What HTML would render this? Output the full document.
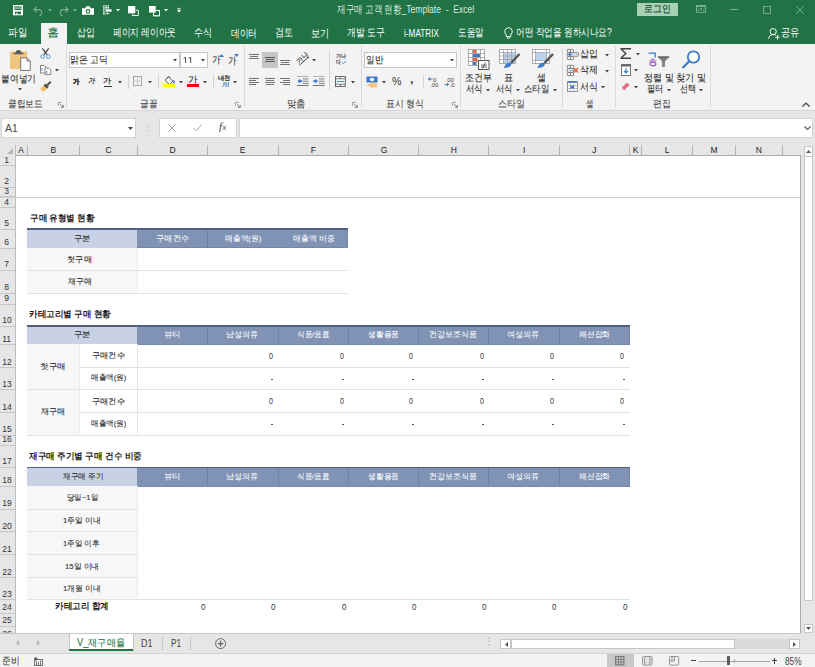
<!DOCTYPE html>
<html><head><meta charset="utf-8"><style>
html,body{margin:0;padding:0;}
body{width:815px;height:667px;overflow:hidden;position:relative;font-family:'Liberation Sans',sans-serif;background:#fff;}
</style></head><body>
<div style='position:absolute;left:0px;top:0px;width:815px;height:44px;background:#217346;'></div>
<svg style='position:absolute;left:13px;top:5.2px;overflow:visible' width='10' height='10.3' viewBox='0 0 10 10.3'><rect x='0' y='0' width='10' height='10.3' fill='#fff'/><rect x='1.4' y='1.4' width='7.2' height='3.6' fill='#217346'/><rect x='1.4' y='2.6' width='7.2' height='1' fill='#cfe3d6'/><rect x='2' y='6.6' width='6' height='2.6' fill='#217346'/><rect x='3.3' y='7.8' width='1.3' height='1.4' fill='#fff'/></svg>
<svg style='position:absolute;left:33px;top:5.5px;overflow:visible' width='11' height='10' viewBox='0 0 11 10'><path d='M3.6 0.9 L0.9 3.6 L3.6 6.3 M0.9 3.6 H6.2 A3.1 3.1 0 0 1 6.5 9.6' fill='none' stroke='#7fb08f' stroke-width='1.1'/></svg>
<svg style='position:absolute;left:48px;top:9px;overflow:visible' width='4' height='3' viewBox='0 0 4 3'><path d='M0 0h4l-2 2.5z' fill='#7fb08f'/></svg>
<svg style='position:absolute;left:57.5px;top:5.5px;overflow:visible' width='11' height='10' viewBox='0 0 11 10'><path d='M7.4 0.9 L10.1 3.6 L7.4 6.3 M10.1 3.6 H4.8 A3.1 3.1 0 0 0 4.5 9.6' fill='none' stroke='#7fb08f' stroke-width='1.1'/></svg>
<svg style='position:absolute;left:72.5px;top:9px;overflow:visible' width='4' height='3' viewBox='0 0 4 3'><path d='M0 0h4l-2 2.5z' fill='#7fb08f'/></svg>
<svg style='position:absolute;left:82px;top:6.2px;overflow:visible' width='12' height='8.8' viewBox='0 0 12 8.8'><path d='M0 2.3h3.2l1.2-2h3.2l1.2 2h3.2v6.5h-12z' fill='#fff'/><circle cx='6' cy='5.4' r='2.3' fill='#217346'/><circle cx='6' cy='5.4' r='1.2' fill='#fff'/></svg>
<svg style='position:absolute;left:102.6px;top:5.4px;overflow:visible' width='9' height='10' viewBox='0 0 9 10'><path d='M0.6 0v10M2 0v10' stroke='#fff' stroke-width='0.7'/><rect x='3' y='0.5' width='2.5' height='1.8' fill='none' stroke='#fff' stroke-width='0.6'/><rect x='3' y='2.5' width='2.5' height='1.5' fill='none' stroke='#fff' stroke-width='0.6'/><rect x='3' y='4.3' width='5.6' height='2.4' fill='#fff'/><path d='M3 8.5l2-1.3v2.6z' fill='#fff'/><path d='M5 8.5h1.5' stroke='#fff' stroke-width='0.7'/></svg>
<svg style='position:absolute;left:116px;top:8.8px;overflow:visible' width='4' height='3' viewBox='0 0 4 3'><path d='M0 0h4l-2 2.5z' fill='#fff'/></svg>
<svg style='position:absolute;left:128.2px;top:5.9px;overflow:visible' width='11' height='10' viewBox='0 0 11 10'><rect x='0' y='0' width='7.3' height='7.3' fill='#fff'/><path d='M7.8 4.2h2.6v5.3h-5.8v-1.7' fill='none' stroke='#fff' stroke-width='0.9'/></svg>
<svg style='position:absolute;left:148.8px;top:5.9px;overflow:visible' width='11' height='10' viewBox='0 0 11 10'><rect x='4.5' y='4.5' width='6' height='5.3' fill='none' stroke='#e3eee6' stroke-width='0.9'/><rect x='0' y='0' width='6.7' height='6.6' fill='#fff'/><path d='M4.5 6.6v3.2h6v-5.3h-3.8' fill='none' stroke='#fff' stroke-width='0.9'/></svg>
<svg style='position:absolute;left:163.5px;top:8.6px;overflow:visible' width='4' height='3' viewBox='0 0 4 3'><path d='M0 0h4l-2 2.5z' fill='#fff'/></svg>
<svg style='position:absolute;left:177px;top:8px;overflow:visible' width='4' height='5' viewBox='0 0 4 5'><path d='M0.3 0.4h3.4' stroke='#fff' stroke-width='0.8'/><path d='M0 1.8h4l-2 2.9z' fill='#fff'/></svg>
<div style='position:absolute;left:636.7px;top:2.9px;width:41.19999999999993px;height:12.9px;background:#a9d1b6;border-radius:1px;'></div>
<svg style='position:absolute;left:696px;top:5.4px;overflow:visible' width='10' height='7.8' viewBox='0 0 10 7.8'><rect x='0.5' y='0.5' width='9' height='6.8' fill='none' stroke='#7aae8b' stroke-width='1'/><rect x='0.5' y='0.5' width='9' height='1.5' fill='#7aae8b'/><path d='M5 3v3M3.8 4.2L5 3l1.2 1.2M2 3.5v2h1M8 3.5v2h-1' fill='none' stroke='#7aae8b' stroke-width='0.8'/></svg>
<div style='position:absolute;left:730.2px;top:9px;width:7.699999999999932px;height:1px;background:#80b192;'></div>
<svg style='position:absolute;left:763px;top:6px;overflow:visible' width='8' height='8' viewBox='0 0 8 8'><rect x='0.5' y='0.5' width='7' height='7' fill='none' stroke='#80b192' stroke-width='0.9'/></svg>
<svg style='position:absolute;left:795.8px;top:6px;overflow:visible' width='8' height='8' viewBox='0 0 8 8'><path d='M0.3 0.3L7.7 7.7M7.7 0.3L0.3 7.7' stroke='#80b192' stroke-width='0.9'/></svg>
<div style='position:absolute;left:40.5px;top:23px;width:26.200000000000003px;height:21px;background:#f3f3f3;'></div>
<svg style='position:absolute;left:503.5px;top:27px;overflow:visible' width='9' height='12' viewBox='0 0 9 12'><path d='M4.5 0.7a3.8 3.8 0 0 1 2.3 6.8v2.2h-4.6v-2.2a3.8 3.8 0 0 1 2.3-6.8z' fill='none' stroke='#fff' stroke-width='1'/><path d='M3 11h3' stroke='#fff' stroke-width='1'/></svg>
<svg style='position:absolute;left:767.7px;top:27.6px;overflow:visible' width='12' height='11' viewBox='0 0 12 11'><circle cx='5.2' cy='3.6' r='3.1' fill='none' stroke='#fff' stroke-width='1'/><path d='M0.6 10.8c0.3-2.6 2.2-4.3 4.6-4.3 1 0 1.8 0.3 2.5 0.7' fill='none' stroke='#fff' stroke-width='1'/><path d='M7.3 9.2h4.4M9.5 7v4.4' stroke='#fff' stroke-width='1.1'/></svg>
<div style='position:absolute;left:0px;top:44px;width:815px;height:66px;background:#f3f3f3;'></div>
<div style='position:absolute;left:0px;top:110px;width:815px;height:1px;background:#d6d6d6;'></div>
<div style='position:absolute;left:0px;top:111px;width:815px;height:34px;background:#e6e6e6;'></div>
<div style='position:absolute;left:65.5px;top:46px;width:1.0px;height:61px;background:#dadada;'></div>
<div style='position:absolute;left:243.9px;top:46px;width:1.0px;height:61px;background:#dadada;'></div>
<div style='position:absolute;left:360.9px;top:46px;width:1.0px;height:61px;background:#dadada;'></div>
<div style='position:absolute;left:460.3px;top:46px;width:1.0px;height:61px;background:#dadada;'></div>
<div style='position:absolute;left:561.6px;top:46px;width:1.0px;height:61px;background:#dadada;'></div>
<div style='position:absolute;left:615.4px;top:46px;width:1.0px;height:61px;background:#dadada;'></div>
<div style='position:absolute;left:710.4px;top:46px;width:1.0px;height:61px;background:#dadada;'></div>
<svg style='position:absolute;left:57.5px;top:102.0px;overflow:visible' width='6' height='6' viewBox='0 0 6 6'><path d='M0.4 4V0.4h3.6' stroke='#888' stroke-width='0.8' fill='none'/><path d='M2 2l3.3 3.3M5.3 2.8v2.5h-2.5' stroke='#666' stroke-width='0.8' fill='none'/></svg>
<svg style='position:absolute;left:234.9px;top:102.0px;overflow:visible' width='6' height='6' viewBox='0 0 6 6'><path d='M0.4 4V0.4h3.6' stroke='#888' stroke-width='0.8' fill='none'/><path d='M2 2l3.3 3.3M5.3 2.8v2.5h-2.5' stroke='#666' stroke-width='0.8' fill='none'/></svg>
<svg style='position:absolute;left:352.4px;top:102.0px;overflow:visible' width='6' height='6' viewBox='0 0 6 6'><path d='M0.4 4V0.4h3.6' stroke='#888' stroke-width='0.8' fill='none'/><path d='M2 2l3.3 3.3M5.3 2.8v2.5h-2.5' stroke='#666' stroke-width='0.8' fill='none'/></svg>
<svg style='position:absolute;left:451.9px;top:102.0px;overflow:visible' width='6' height='6' viewBox='0 0 6 6'><path d='M0.4 4V0.4h3.6' stroke='#888' stroke-width='0.8' fill='none'/><path d='M2 2l3.3 3.3M5.3 2.8v2.5h-2.5' stroke='#666' stroke-width='0.8' fill='none'/></svg>
<svg style='position:absolute;left:10px;top:49.3px;overflow:visible' width='21' height='22' viewBox='0 0 21 22'><rect x='0.1' y='2.5' width='17' height='17.6' fill='#efc67e'/><path d='M3.5 5.3h10v-1.5h-2.2a2.3 2.3 0 0 0-5.6 0h-2.2z' fill='#5a5a5a'/><path d='M10.7 8.8h6.3l3.3 3.3v9.3h-9.6z' fill='#fff' stroke='#666' stroke-width='0.9'/><path d='M17 8.8v3.3h3.3' fill='none' stroke='#666' stroke-width='0.9'/></svg>
<svg style='position:absolute;left:18px;top:88px;overflow:visible' width='4' height='3' viewBox='0 0 4 3'><path d='M0 0h4l-2 2.5z' fill='#444'/></svg>
<svg style='position:absolute;left:40px;top:48px;overflow:visible' width='11' height='11' viewBox='0 0 11 11'><path d='M2.3 0.3L7.1 6.6M8.7 0.3L3.9 6.6' stroke='#3a3a3a' stroke-width='1.1'/><circle cx='2.6' cy='8.6' r='1.8' fill='none' stroke='#5b93cf' stroke-width='1'/><circle cx='8.4' cy='8.6' r='1.8' fill='none' stroke='#5b93cf' stroke-width='1'/></svg>
<svg style='position:absolute;left:39.5px;top:65.3px;overflow:visible' width='12' height='10' viewBox='0 0 12 10'><path d='M0.5 0.5h3.8l1.6 1.6v5.9h-5.4z' fill='#fff' stroke='#777' stroke-width='0.9'/><path d='M5 3h3.8l2 2v4.6h-5.8z' fill='#fff' stroke='#777' stroke-width='0.9'/><path d='M2 3v2.8M6.8 6v2.5' stroke='#5b93cf' stroke-width='1.1'/></svg>
<svg style='position:absolute;left:55.3px;top:69px;overflow:visible' width='4' height='3' viewBox='0 0 4 3'><path d='M0 0h4l-2 2.5z' fill='#444'/></svg>
<svg style='position:absolute;left:40px;top:81.6px;overflow:visible' width='12' height='10.5' viewBox='0 0 12 10.5'><path d='M0.2 6.8L3.6 3.4 6.9 6.7 3.3 10.1z' fill='#ebbd66'/><path d='M3.6 3.4L5.6 1.5 8.8 4.7 6.9 6.7z' fill='#4f4f4f'/><path d='M7.2 3.2L10.6 -0.2' stroke='#4f4f4f' stroke-width='2'/></svg>
<div style='position:absolute;left:69.2px;top:52px;width:111.3px;height:15.5px;background:#fff;border:1px solid #c6c6c6;box-sizing:border-box;'></div>
<div style='position:absolute;left:179.5px;top:52px;width:28.80000000000001px;height:15.5px;background:#fff;border:1px solid #c6c6c6;box-sizing:border-box;'></div>
<svg style='position:absolute;left:173.2px;top:59px;overflow:visible' width='4' height='3' viewBox='0 0 4 3'><path d='M0 0h4l-2 2.5z' fill='#444'/></svg>
<svg style='position:absolute;left:201.4px;top:59px;overflow:visible' width='4' height='3' viewBox='0 0 4 3'><path d='M0 0h4l-2 2.5z' fill='#444'/></svg>
<svg style='position:absolute;left:183px;top:57px;overflow:visible' width='9' height='6' viewBox='0 0 9 6'><path d='M0.6 1.4L2.5 0.3V6M5.8 1.4L7.7 0.3V6' fill='none' stroke='#444' stroke-width='0.95'/></svg>
<svg style='position:absolute;left:219px;top:54px;overflow:visible' width='5' height='3' viewBox='0 0 5 3'><path d='M0 3h5l-2.5-3z' fill='#3d7bc7'/></svg>
<svg style='position:absolute;left:234px;top:54px;overflow:visible' width='5' height='3' viewBox='0 0 5 3'><path d='M0 0h5l-2.5 3z' fill='#3d7bc7'/></svg>
<div style='position:absolute;left:104px;top:85.5px;width:7.900000000000006px;height:0.7999999999999972px;background:#333;'></div>
<svg style='position:absolute;left:117.5px;top:80.5px;overflow:visible' width='4' height='3' viewBox='0 0 4 3'><path d='M0 0h4l-2 2.5z' fill='#444'/></svg>
<div style='position:absolute;left:127.5px;top:75px;width:1.0px;height:14px;background:#d0d0d0;'></div>
<svg style='position:absolute;left:133.4px;top:76px;overflow:visible' width='9' height='10' viewBox='0 0 9 10'><rect x='0.5' y='0.5' width='8' height='9' fill='none' stroke='#a6a6a6' stroke-width='1'/><path d='M4.5 0.5v9M0.5 5h8' stroke='#c8c8c8' stroke-width='1'/></svg>
<svg style='position:absolute;left:148.2px;top:80.5px;overflow:visible' width='4' height='3' viewBox='0 0 4 3'><path d='M0 0h4l-2 2.5z' fill='#444'/></svg>
<div style='position:absolute;left:158px;top:75px;width:1px;height:14px;background:#d0d0d0;'></div>
<svg style='position:absolute;left:164px;top:75.5px;overflow:visible' width='12' height='9' viewBox='0 0 12 9'><path d='M1 4.2l3.6-3.2 4.2 4.2-3.4 3.3z' fill='#fff' stroke='#444' stroke-width='0.9'/><path d='M3 2.6c0-2 2.5-2.5 3.2-0.5' fill='none' stroke='#444' stroke-width='0.8'/><path d='M9.2 3.5c1.3 1.3 2 2.5 1.5 3.6-0.5 0.8-1.6 0.6-1.6-0.4z' fill='#3d7bc7'/></svg>
<div style='position:absolute;left:163px;top:84.1px;width:11.599999999999994px;height:3.0px;background:#ffff00;'></div>
<svg style='position:absolute;left:179px;top:81px;overflow:visible' width='4' height='3' viewBox='0 0 4 3'><path d='M0 0h4l-2 2.5z' fill='#444'/></svg>
<div style='position:absolute;left:187.2px;top:84.1px;width:11.5px;height:3.0px;background:#ff0000;'></div>
<svg style='position:absolute;left:202.8px;top:81px;overflow:visible' width='4' height='3' viewBox='0 0 4 3'><path d='M0 0h4l-2 2.5z' fill='#444'/></svg>
<div style='position:absolute;left:212.6px;top:75px;width:1.0px;height:14px;background:#d0d0d0;'></div>
<svg style='position:absolute;left:221.9px;top:81.6px;overflow:visible' width='7' height='5' viewBox='0 0 7 5'><path d='M2 0v2.8c0 1-0.8 1.8-1.8 1.8M4 0v5M6.3 0v5' fill='none' stroke='#3d7bc7' stroke-width='1'/></svg>
<svg style='position:absolute;left:233.3px;top:80.5px;overflow:visible' width='4' height='3' viewBox='0 0 4 3'><path d='M0 0h4l-2 2.5z' fill='#444'/></svg>
<div style='position:absolute;left:249px;top:54px;width:10px;height:1px;background:#737373;'></div>
<div style='position:absolute;left:250px;top:56px;width:8px;height:1px;background:#737373;'></div>
<div style='position:absolute;left:249px;top:58px;width:10px;height:1px;background:#737373;'></div>
<div style='position:absolute;left:262px;top:52px;width:16px;height:16px;background:#c5c5c5;'></div>
<div style='position:absolute;left:265px;top:57px;width:10px;height:1px;background:#555;'></div>
<div style='position:absolute;left:266px;top:59px;width:8px;height:1px;background:#555;'></div>
<div style='position:absolute;left:265px;top:61px;width:10px;height:1px;background:#555;'></div>
<div style='position:absolute;left:280px;top:60px;width:10px;height:1px;background:#737373;'></div>
<div style='position:absolute;left:281px;top:62px;width:8px;height:1px;background:#737373;'></div>
<div style='position:absolute;left:280px;top:64px;width:10px;height:1px;background:#737373;'></div>
<svg style='position:absolute;left:297px;top:53px;overflow:visible' width='13' height='13' viewBox='0 0 13 13'><g transform='translate(-1.2,-1.5) rotate(-45 6 7)'><text x='0.5' y='9' font-size='6.5' fill='#444' font-family='Liberation Sans' stroke='#444' stroke-width='0.15'>가나</text></g><path d='M2.5 12.3L10.5 4.8' stroke='#444' stroke-width='1'/><circle cx='10.8' cy='4.6' r='1' fill='#444'/></svg>
<svg style='position:absolute;left:311.6px;top:58.5px;overflow:visible' width='4' height='3' viewBox='0 0 4 3'><path d='M0 0h4l-2 2.5z' fill='#444'/></svg>
<div style='position:absolute;left:329.4px;top:51.4px;width:1.0px;height:38.300000000000004px;background:#d5d5d5;'></div>
<svg style='position:absolute;left:341.5px;top:61px;overflow:visible' width='4' height='3' viewBox='0 0 4 3'><path d='M0.3 1.5l1.2 1.2 2.3-2.5' stroke='#3d7bc7' stroke-width='1' fill='none'/></svg>
<div style='position:absolute;left:249px;top:78px;width:10px;height:1px;background:#737373;'></div>
<div style='position:absolute;left:265px;top:78px;width:10px;height:1px;background:#737373;'></div>
<div style='position:absolute;left:280px;top:78px;width:10px;height:1px;background:#737373;'></div>
<div style='position:absolute;left:249px;top:80px;width:7px;height:1px;background:#737373;'></div>
<div style='position:absolute;left:266px;top:80px;width:8px;height:1px;background:#737373;'></div>
<div style='position:absolute;left:283px;top:80px;width:7px;height:1px;background:#737373;'></div>
<div style='position:absolute;left:249px;top:82px;width:10px;height:1px;background:#737373;'></div>
<div style='position:absolute;left:265px;top:82px;width:10px;height:1px;background:#737373;'></div>
<div style='position:absolute;left:280px;top:82px;width:10px;height:1px;background:#737373;'></div>
<div style='position:absolute;left:249px;top:84px;width:7px;height:1px;background:#737373;'></div>
<div style='position:absolute;left:266px;top:84px;width:8px;height:1px;background:#737373;'></div>
<div style='position:absolute;left:283px;top:84px;width:7px;height:1px;background:#737373;'></div>
<svg style='position:absolute;left:297.4px;top:76px;overflow:visible' width='12' height='10' viewBox='0 0 12 10'><rect x='0' y='0' width='11.6' height='0.9' fill='#aaa'/><rect x='5.8' y='2.5' width='5.8' height='0.9' fill='#777'/><rect x='5.8' y='4.7' width='5.8' height='0.9' fill='#777'/><rect x='5.8' y='6.9' width='5.8' height='0.9' fill='#777'/><rect x='0' y='9.1' width='11.6' height='0.9' fill='#666'/><path d='M0.3 5.1l2.8-2.4v4.8z' fill='#3d7bc7'/><rect x='2.5' y='4.2' width='2.6' height='1.8' fill='#3d7bc7'/></svg>
<svg style='position:absolute;left:313px;top:76px;overflow:visible' width='12' height='10' viewBox='0 0 12 10'><rect x='0' y='0' width='11.6' height='0.9' fill='#aaa'/><rect x='5.8' y='2.5' width='5.8' height='0.9' fill='#777'/><rect x='5.8' y='4.7' width='5.8' height='0.9' fill='#777'/><rect x='5.8' y='6.9' width='5.8' height='0.9' fill='#777'/><rect x='0' y='9.1' width='11.6' height='0.9' fill='#666'/><path d='M5 5.1l-2.8-2.4v4.8z' fill='#3d7bc7'/><rect x='0.2' y='4.2' width='2.6' height='1.8' fill='#3d7bc7'/></svg>
<svg style='position:absolute;left:335.1px;top:75.8px;overflow:visible' width='11' height='11' viewBox='0 0 11 11'><rect x='0.5' y='0.5' width='9.8' height='10' fill='#fff' stroke='#666' stroke-width='1'/><path d='M0.5 2.8h9.8M0.5 8.2h9.8M5.4 0.5v2.3M5.4 8.2v2.3' stroke='#666' stroke-width='0.9'/><path d='M2.3 5.5h6.2' stroke='#3d7bc7' stroke-width='0.9'/><path d='M1.6 5.5l1.3-1v2zM9.2 5.5l-1.3-1v2z' fill='#3d7bc7'/></svg>
<svg style='position:absolute;left:350.7px;top:80.5px;overflow:visible' width='4' height='3' viewBox='0 0 4 3'><path d='M0 0h4l-2 2.5z' fill='#444'/></svg>
<div style='position:absolute;left:364.1px;top:52.1px;width:92.5px;height:15.499999999999993px;background:#fff;border:1px solid #c6c6c6;box-sizing:border-box;'></div>
<svg style='position:absolute;left:449.5px;top:59px;overflow:visible' width='4' height='3' viewBox='0 0 4 3'><path d='M0 0h4l-2 2.5z' fill='#444'/></svg>
<svg style='position:absolute;left:366px;top:75.7px;overflow:visible' width='12' height='12' viewBox='0 0 12 12'><rect x='0.5' y='0.5' width='11' height='6' fill='#3d7bc7'/><ellipse cx='6' cy='3.5' rx='2.2' ry='1.8' fill='#fff'/><rect x='4' y='7' width='7' height='4.5' fill='#f2c57c'/><rect x='1.5' y='8' width='3' height='2' fill='#f2c57c'/></svg>
<svg style='position:absolute;left:381.7px;top:80.5px;overflow:visible' width='4' height='3' viewBox='0 0 4 3'><path d='M0 0h4l-2 2.5z' fill='#444'/></svg>
<div style='position:absolute;left:422.7px;top:75px;width:1.0px;height:14px;background:#d5d5d5;'></div>
<svg style='position:absolute;left:427.9px;top:76px;overflow:visible' width='11' height='11' viewBox='0 0 11 11'><path d='M0.5 3h4' stroke='#3d7bc7' stroke-width='1'/><path d='M0 3l2-2v4z' fill='#3d7bc7'/><text x='5' y='5.5' font-size='6' fill='#444' font-family='Liberation Sans'>0</text><text x='2' y='11' font-size='6' fill='#444' font-family='Liberation Sans'>.00</text></svg>
<svg style='position:absolute;left:444.1px;top:76px;overflow:visible' width='11' height='11' viewBox='0 0 11 11'><text x='1.5' y='5.5' font-size='6' fill='#444' font-family='Liberation Sans'>.00</text><path d='M0.5 8.5h4' stroke='#3d7bc7' stroke-width='1'/><path d='M5 8.5l-2-2v4z' fill='#3d7bc7'/><text x='5.5' y='11' font-size='6' fill='#444' font-family='Liberation Sans'>.0</text></svg>
<svg style='position:absolute;left:468.1px;top:49.4px;overflow:visible' width='22' height='21' viewBox='0 0 22 21'><g stroke='#9a9a9a' stroke-width='0.8' fill='#fff'><rect x='0.5' y='0.5' width='16' height='16'/></g><path d='M0.5 4.5h16M0.5 8.5h16M0.5 12.5h16M4.5 0.5v16M8.5 0.5v16M12.5 0.5v16' stroke='#9a9a9a' stroke-width='0.8'/><rect x='5' y='1' width='3' height='3' fill='#e8643c'/><rect x='5' y='5' width='7' height='3' fill='#3d7bc7'/><rect x='5' y='9' width='4.5' height='3' fill='#e8643c'/><rect x='5' y='13' width='3' height='3' fill='#3d7bc7'/><rect x='10.5' y='11.5' width='10.5' height='9' fill='#fff' stroke='#444' stroke-width='0.9'/><path d='M13 16h6M13 18h6M17.5 13.5l-3 6' stroke='#444' stroke-width='0.8'/></svg>
<svg style='position:absolute;left:486px;top:88.5px;overflow:visible' width='4' height='3' viewBox='0 0 4 3'><path d='M0 0h4l-2 2.5z' fill='#444'/></svg>
<svg style='position:absolute;left:499.2px;top:49.4px;overflow:visible' width='21' height='21' viewBox='0 0 21 21'><rect x='0.5' y='0.5' width='16' height='14' fill='#fff' stroke='#9a9a9a' stroke-width='0.8'/><rect x='4' y='4' width='12' height='10' fill='#bcd3ee'/><path d='M0.5 3.5h16M0.5 7h16M0.5 10.5h16M4.5 0.5v14M8.5 0.5v14M12.5 0.5v14' stroke='#9a9a9a' stroke-width='0.7'/><path d='M20.5 5L12 14' stroke='#555' stroke-width='2.5'/><path d='M5 19c1-5 5-6 7-5 1 2-1 5-7 5z' fill='#3d7bc7'/></svg>
<svg style='position:absolute;left:515.5px;top:88.5px;overflow:visible' width='4' height='3' viewBox='0 0 4 3'><path d='M0 0h4l-2 2.5z' fill='#444'/></svg>
<svg style='position:absolute;left:531.5px;top:49.4px;overflow:visible' width='22' height='21' viewBox='0 0 22 21'><rect x='0.5' y='0.5' width='17' height='14' fill='#fff' stroke='#9a9a9a' stroke-width='0.8'/><rect x='3.5' y='3.5' width='11' height='8' fill='#bcd3ee'/><path d='M0.5 3.5h17M0.5 11.5h17M3.5 0.5v14M14.5 0.5v14' stroke='#9a9a9a' stroke-width='0.7'/><path d='M21 5L12.5 14' stroke='#555' stroke-width='2.5'/><path d='M5.5 19c1-5 5-6 7-5 1 2-1 5-7 5z' fill='#3d7bc7'/></svg>
<svg style='position:absolute;left:552.5px;top:88.5px;overflow:visible' width='4' height='3' viewBox='0 0 4 3'><path d='M0 0h4l-2 2.5z' fill='#444'/></svg>
<svg style='position:absolute;left:567px;top:48.7px;overflow:visible' width='13' height='12' viewBox='0 0 13 12'><g fill='#fff' stroke='#666' stroke-width='0.8'><rect x='0.4' y='0.4' width='3' height='3' rx='0.6'/><rect x='3.4' y='0.4' width='3' height='3' rx='0.6'/><rect x='0.4' y='7.6' width='3' height='3' rx='0.6'/><rect x='3.4' y='7.6' width='3' height='3' rx='0.6'/></g><rect x='0.4' y='3.7' width='11' height='3.5' rx='0.6' fill='#fff' stroke='#666' stroke-width='0.8'/><path d='M4.5 5.45h6' stroke='#8fb4e0' stroke-width='1.3' stroke-dasharray='1.5 0.7'/><path d='M0.8 5.45l2.6-2v4z' fill='#3d7bc7'/><rect x='2.5' y='4.7' width='2' height='1.5' fill='#3d7bc7'/></svg>
<svg style='position:absolute;left:604.6px;top:54px;overflow:visible' width='4' height='3' viewBox='0 0 4 3'><path d='M0 0h4l-2 2.5z' fill='#444'/></svg>
<svg style='position:absolute;left:567px;top:64.7px;overflow:visible' width='13' height='12' viewBox='0 0 13 12'><g fill='#fff' stroke='#666' stroke-width='0.8'><rect x='0.4' y='0.4' width='3' height='3' rx='0.6'/><rect x='3.4' y='0.4' width='3' height='3' rx='0.6'/><rect x='0.4' y='7.6' width='3' height='3' rx='0.6'/><rect x='3.4' y='7.6' width='3' height='3' rx='0.6'/></g><rect x='0.4' y='3.7' width='6' height='3.5' rx='0.6' fill='#fff' stroke='#666' stroke-width='0.8'/><path d='M2 5.45h4' stroke='#8fb4e0' stroke-width='1.1'/><path d='M6.7 3l4.5 4.5M11.2 3l-4.5 4.5' stroke='#e0522a' stroke-width='1.2'/></svg>
<svg style='position:absolute;left:604.6px;top:70px;overflow:visible' width='4' height='3' viewBox='0 0 4 3'><path d='M0 0h4l-2 2.5z' fill='#444'/></svg>
<svg style='position:absolute;left:566.8px;top:81.1px;overflow:visible' width='11' height='11' viewBox='0 0 11 11'><rect x='0.5' y='1.5' width='10' height='9' fill='#fff' stroke='#777' stroke-width='0.8'/><path d='M0.5 4.5h10M0.5 7.5h10M3.5 1.5v9M7 1.5v9' stroke='#999' stroke-width='0.6'/><rect x='3.5' y='4.5' width='3.5' height='3' fill='#3d7bc7'/><rect x='0.5' y='0' width='10' height='1.2' fill='#3d7bc7'/></svg>
<svg style='position:absolute;left:600.5px;top:86px;overflow:visible' width='4' height='3' viewBox='0 0 4 3'><path d='M0 0h4l-2 2.5z' fill='#444'/></svg>
<svg style='position:absolute;left:620.3px;top:48px;overflow:visible' width='12' height='11' viewBox='0 0 12 11'><path d='M0.5 0.7h10.5M0.5 10.3h10.5M0.8 0.7l5 4.8-5 4.8' fill='none' stroke='#444' stroke-width='1.4'/></svg>
<svg style='position:absolute;left:635.6px;top:52.5px;overflow:visible' width='4' height='3' viewBox='0 0 4 3'><path d='M0 0h4l-2 2.5z' fill='#444'/></svg>
<svg style='position:absolute;left:621.2px;top:64.2px;overflow:visible' width='10' height='12' viewBox='0 0 10 12'><rect x='0.5' y='0.5' width='9' height='11' fill='#fff' stroke='#666' stroke-width='0.9'/><rect x='0.5' y='0.5' width='9' height='2' fill='#666'/><path d='M5 4v5M3 7l2 2 2-2' stroke='#3d7bc7' stroke-width='1.1' fill='none'/></svg>
<svg style='position:absolute;left:634.3px;top:69px;overflow:visible' width='4' height='3' viewBox='0 0 4 3'><path d='M0 0h4l-2 2.5z' fill='#444'/></svg>
<svg style='position:absolute;left:621.4px;top:81.8px;overflow:visible' width='9' height='9' viewBox='0 0 9 9'><path d='M0.5 6l5.5-5.5 2.5 2.5-5.5 5.5z' fill='#e06b82'/><path d='M0.5 6l2.5 2.5' stroke='#fff' stroke-width='0.6'/></svg>
<svg style='position:absolute;left:634.3px;top:85.5px;overflow:visible' width='4' height='3' viewBox='0 0 4 3'><path d='M0 0h4l-2 2.5z' fill='#444'/></svg>
<svg style='position:absolute;left:647.5px;top:52px;overflow:visible' width='22' height='15' viewBox='0 0 22 15'><path d='M0.6 1.2h6.6v4.3' fill='none' stroke='#3d7bc7' stroke-width='1.3'/><path d='M3 7.3h3.5M1.3 9h7' stroke='#9b59c8' stroke-width='1.1'/><ellipse cx='4.9' cy='12' rx='3' ry='1.9' fill='none' stroke='#9b59c8' stroke-width='1.2'/><path d='M9.5 4.5h12l-4.6 5v5.5h-2.8v-5.5z' fill='#808080'/><path d='M9.5 4.5h12l-1.2 1.3h-9.6z' fill='#5a5a5a'/></svg>
<svg style='position:absolute;left:666.5px;top:88.5px;overflow:visible' width='4' height='3' viewBox='0 0 4 3'><path d='M0 0h4l-2 2.5z' fill='#444'/></svg>
<svg style='position:absolute;left:680.8px;top:50px;overflow:visible' width='20' height='19' viewBox='0 0 20 19'><circle cx='12.5' cy='7' r='5.7' fill='#fff' stroke='#3d7bc7' stroke-width='1.8'/><path d='M8.5 11L1.5 18' stroke='#3d7bc7' stroke-width='2.2'/></svg>
<svg style='position:absolute;left:698.5px;top:88.5px;overflow:visible' width='4' height='3' viewBox='0 0 4 3'><path d='M0 0h4l-2 2.5z' fill='#444'/></svg>
<svg style='position:absolute;left:801.5px;top:101.5px;overflow:visible' width='8' height='5' viewBox='0 0 8 5'><path d='M0.5 4.5l3.5-3.5 3.5 3.5' fill='none' stroke='#444' stroke-width='1.2'/></svg>
<div style='position:absolute;left:1.2px;top:117.8px;width:135.3px;height:19.799999999999997px;background:#fff;border:1px solid #d4d4d4;box-sizing:border-box;'></div>
<svg style='position:absolute;left:127.5px;top:126.5px;overflow:visible' width='5' height='3' viewBox='0 0 5 3'><path d='M0 0h5l-2.5 3z' fill='#444'/></svg>
<svg style='position:absolute;left:146.5px;top:123px;overflow:visible' width='2' height='9' viewBox='0 0 2 9'><circle cx='1' cy='1' r='0.55' fill='#aaa'/><circle cx='1' cy='4.3' r='0.55' fill='#aaa'/><circle cx='1' cy='7.6' r='0.55' fill='#aaa'/></svg>
<div style='position:absolute;left:158.7px;top:117.8px;width:78.0px;height:19.799999999999997px;background:#fff;border:1px solid #d4d4d4;box-sizing:border-box;'></div>
<svg style='position:absolute;left:167.5px;top:123.5px;overflow:visible' width='8' height='8' viewBox='0 0 8 8'><path d='M0.5 0.5l7 7M7.5 0.5l-7 7' stroke='#aaa' stroke-width='1'/></svg>
<svg style='position:absolute;left:192.5px;top:123.5px;overflow:visible' width='9' height='8' viewBox='0 0 9 8'><path d='M0.5 4l3 3 5-6.5' fill='none' stroke='#aaa' stroke-width='1'/></svg>
<div style="position:absolute;left:219px;top:121px;font-family:'Liberation Serif',serif;font-style:italic;font-size:11px;line-height:1;color:#3a3a3a">f<span style='font-size:8px;margin-left:0.5px'>x</span></div>
<div style='position:absolute;left:239px;top:117.8px;width:573.5px;height:19.799999999999997px;background:#fff;border:1px solid #d4d4d4;box-sizing:border-box;'></div>
<svg style='position:absolute;left:803.5px;top:125.5px;overflow:visible' width='7' height='4' viewBox='0 0 7 4'><path d='M0.5 0.5l3 3 3-3' fill='none' stroke='#555' stroke-width='1.1'/></svg>
<div style='position:absolute;left:0px;top:145px;width:15px;height:488.5px;background:#e6e6e6;'></div>
<div style='position:absolute;left:15px;top:145px;width:785.5px;height:10px;background:#e6e6e6;'></div>
<div style='position:absolute;left:15px;top:155px;width:785.5px;height:478.5px;background:#fff;'></div>
<div style='position:absolute;left:26.8px;top:145px;width:1.0px;height:10px;background:#b4b4b4;'></div>
<div style='position:absolute;left:79.0px;top:145px;width:1.0px;height:10px;background:#b4b4b4;'></div>
<div style='position:absolute;left:136.9px;top:145px;width:1.0px;height:10px;background:#b4b4b4;'></div>
<div style='position:absolute;left:207.0px;top:145px;width:1.0px;height:10px;background:#b4b4b4;'></div>
<div style='position:absolute;left:277.5px;top:145px;width:1.0px;height:10px;background:#b4b4b4;'></div>
<div style='position:absolute;left:348.2px;top:145px;width:1.0px;height:10px;background:#b4b4b4;'></div>
<div style='position:absolute;left:418.1px;top:145px;width:1.0px;height:10px;background:#b4b4b4;'></div>
<div style='position:absolute;left:488.3px;top:145px;width:1.0px;height:10px;background:#b4b4b4;'></div>
<div style='position:absolute;left:558.5px;top:145px;width:1.0px;height:10px;background:#b4b4b4;'></div>
<div style='position:absolute;left:629.0px;top:145px;width:1.0px;height:10px;background:#b4b4b4;'></div>
<div style='position:absolute;left:641.3px;top:145px;width:1.0px;height:10px;background:#b4b4b4;'></div>
<div style='position:absolute;left:692.2px;top:145px;width:1.0px;height:10px;background:#b4b4b4;'></div>
<div style='position:absolute;left:735.0px;top:145px;width:1.0px;height:10px;background:#b4b4b4;'></div>
<div style='position:absolute;left:781.5px;top:145px;width:1.0px;height:10px;background:#b4b4b4;'></div>
<div style='position:absolute;left:15px;top:154.6px;width:785.5px;height:1.0px;background:#ababab;'></div>
<div style='position:absolute;left:15.1px;top:145px;width:1.0000000000000018px;height:488.5px;background:#bdbdbd;'></div>
<svg style='position:absolute;left:7px;top:147.5px;overflow:visible' width='6' height='6' viewBox='0 0 6 6'><path d='M6 0v6h-6z' fill='#b6b6b6'/></svg>
<div style='position:absolute;left:0px;top:164.9px;width:15px;height:1.0px;background:#c6c6c6;'></div>
<div style='position:absolute;left:0px;top:186.5px;width:15px;height:1.0px;background:#c6c6c6;'></div>
<div style='position:absolute;left:0px;top:196.3px;width:15px;height:1.0px;background:#c6c6c6;'></div>
<div style='position:absolute;left:0px;top:207.0px;width:15px;height:1.0px;background:#c6c6c6;'></div>
<div style='position:absolute;left:0px;top:228.8px;width:15px;height:1.0px;background:#c6c6c6;'></div>
<div style='position:absolute;left:0px;top:247.5px;width:15px;height:1.0px;background:#c6c6c6;'></div>
<div style='position:absolute;left:0px;top:269.5px;width:15px;height:1.0px;background:#c6c6c6;'></div>
<div style='position:absolute;left:0px;top:292.7px;width:15px;height:1.0px;background:#c6c6c6;'></div>
<div style='position:absolute;left:0px;top:303.7px;width:15px;height:1.0px;background:#c6c6c6;'></div>
<div style='position:absolute;left:0px;top:325.5px;width:15px;height:1.0px;background:#c6c6c6;'></div>
<div style='position:absolute;left:0px;top:343.9px;width:15px;height:1.0px;background:#c6c6c6;'></div>
<div style='position:absolute;left:0px;top:366.9px;width:15px;height:1.0px;background:#c6c6c6;'></div>
<div style='position:absolute;left:0px;top:389.2px;width:15px;height:1.0px;background:#c6c6c6;'></div>
<div style='position:absolute;left:0px;top:412.0px;width:15px;height:1.0px;background:#c6c6c6;'></div>
<div style='position:absolute;left:0px;top:434.7px;width:15px;height:1.0px;background:#c6c6c6;'></div>
<div style='position:absolute;left:0px;top:444.8px;width:15px;height:1.0px;background:#c6c6c6;'></div>
<div style='position:absolute;left:0px;top:466.5px;width:15px;height:1.0px;background:#c6c6c6;'></div>
<div style='position:absolute;left:0px;top:485.8px;width:15px;height:1.0px;background:#c6c6c6;'></div>
<div style='position:absolute;left:0px;top:508.8px;width:15px;height:1.0px;background:#c6c6c6;'></div>
<div style='position:absolute;left:0px;top:531.0px;width:15px;height:1.0px;background:#c6c6c6;'></div>
<div style='position:absolute;left:0px;top:553.9px;width:15px;height:1.0px;background:#c6c6c6;'></div>
<div style='position:absolute;left:0px;top:576.9px;width:15px;height:1.0px;background:#c6c6c6;'></div>
<div style='position:absolute;left:0px;top:599.3px;width:15px;height:1.0px;background:#c6c6c6;'></div>
<div style='position:absolute;left:0px;top:612.7px;width:15px;height:1.0px;background:#c6c6c6;'></div>
<div style='position:absolute;left:0px;top:625.7px;width:15px;height:1.0px;background:#c6c6c6;'></div>
<div style='position:absolute;left:0px;top:196.6px;width:800.5px;height:1.3000000000000114px;background:#cfcfcf;'></div>
<div style='position:absolute;left:800.0px;top:155px;width:1.0px;height:478.5px;background:#ababab;'></div>
<div style='position:absolute;left:0px;top:633.0px;width:800.5px;height:1.0px;background:#c6c6c6;z-index:5;'></div>
<div style='position:absolute;left:27.3px;top:228.4px;width:321.09999999999997px;height:1.799999999999983px;background:#4f5f80;'></div>
<div style='position:absolute;left:27.3px;top:230.2px;width:110.10000000000001px;height:17.80000000000001px;background:#c8d2e4;'></div>
<div style='position:absolute;left:137.4px;top:230.2px;width:210.99999999999997px;height:17.80000000000001px;background:#8093b5;'></div>
<div style='position:absolute;left:137.4px;top:247.2px;width:210.99999999999997px;height:0.8000000000000114px;background:#7487ab;'></div>
<div style='position:absolute;left:347.4px;top:230.2px;width:1.0px;height:17.80000000000001px;background:#7487ab;'></div>
<div style='position:absolute;left:207px;top:230.2px;width:1px;height:17.80000000000001px;background:#6f82a6;'></div>
<div style='position:absolute;left:27.3px;top:248px;width:110.10000000000001px;height:45px;background:#f7f7f7;'></div>
<div style='position:absolute;left:27.3px;top:269.5px;width:321.09999999999997px;height:1.0px;background:#e3e3e3;'></div>
<div style='position:absolute;left:27.3px;top:292.5px;width:321.09999999999997px;height:1.0px;background:#e3e3e3;'></div>
<div style='position:absolute;left:136.9px;top:248px;width:1.0px;height:45px;background:#ececec;'></div>
<div style='position:absolute;left:27.3px;top:324.9px;width:602.7px;height:1.7000000000000455px;background:#4f5f80;'></div>
<div style='position:absolute;left:27.3px;top:326.6px;width:110.10000000000001px;height:17.899999999999977px;background:#c8d2e4;'></div>
<div style='position:absolute;left:137.4px;top:326.6px;width:492.6px;height:17.899999999999977px;background:#8093b5;'></div>
<div style='position:absolute;left:137.4px;top:343.7px;width:492.6px;height:0.8000000000000114px;background:#7487ab;'></div>
<div style='position:absolute;left:629.2px;top:326.6px;width:0.7999999999999545px;height:17.899999999999977px;background:#7487ab;'></div>
<div style='position:absolute;left:207.0px;top:327px;width:1.0px;height:17.399999999999977px;background:#6f82a6;'></div>
<div style='position:absolute;left:277.5px;top:327px;width:1.0px;height:17.399999999999977px;background:#6f82a6;'></div>
<div style='position:absolute;left:348.2px;top:327px;width:1.0px;height:17.399999999999977px;background:#6f82a6;'></div>
<div style='position:absolute;left:418.1px;top:327px;width:1.0px;height:17.399999999999977px;background:#6f82a6;'></div>
<div style='position:absolute;left:488.3px;top:327px;width:1.0px;height:17.399999999999977px;background:#6f82a6;'></div>
<div style='position:absolute;left:558.5px;top:327px;width:1.0px;height:17.399999999999977px;background:#6f82a6;'></div>
<div style='position:absolute;left:27.3px;top:344.4px;width:52.2px;height:90.80000000000001px;background:#f7f7f7;'></div>
<div style='position:absolute;left:79.5px;top:366.9px;width:550.5px;height:1.0px;background:#e3e3e3;'></div>
<div style='position:absolute;left:79.5px;top:412.0px;width:550.5px;height:1.0px;background:#e3e3e3;'></div>
<div style='position:absolute;left:27.3px;top:389.2px;width:602.7px;height:1.0px;background:#e3e3e3;'></div>
<div style='position:absolute;left:27.3px;top:434.7px;width:602.7px;height:1.0px;background:#e3e3e3;'></div>
<div style='position:absolute;left:79px;top:344.4px;width:1px;height:90.80000000000001px;background:#ececec;'></div>
<div style='position:absolute;left:136.9px;top:344.4px;width:1.0px;height:90.80000000000001px;background:#e6e6e6;'></div>
<div style='position:absolute;left:271.2px;top:378.6px;width:2.1000000000000227px;height:1.0px;background:#555;'></div>
<div style='position:absolute;left:271.2px;top:423.8px;width:2.1000000000000227px;height:1.0px;background:#555;'></div>
<div style='position:absolute;left:341.9px;top:378.6px;width:2.1000000000000227px;height:1.0px;background:#555;'></div>
<div style='position:absolute;left:341.9px;top:423.8px;width:2.1000000000000227px;height:1.0px;background:#555;'></div>
<div style='position:absolute;left:411.8px;top:378.6px;width:2.1000000000000227px;height:1.0px;background:#555;'></div>
<div style='position:absolute;left:411.8px;top:423.8px;width:2.1000000000000227px;height:1.0px;background:#555;'></div>
<div style='position:absolute;left:482.0px;top:378.6px;width:2.1000000000000227px;height:1.0px;background:#555;'></div>
<div style='position:absolute;left:482.0px;top:423.8px;width:2.1000000000000227px;height:1.0px;background:#555;'></div>
<div style='position:absolute;left:552.2px;top:378.6px;width:2.099999999999909px;height:1.0px;background:#555;'></div>
<div style='position:absolute;left:552.2px;top:423.8px;width:2.099999999999909px;height:1.0px;background:#555;'></div>
<div style='position:absolute;left:622.7px;top:378.6px;width:2.099999999999909px;height:1.0px;background:#555;'></div>
<div style='position:absolute;left:622.7px;top:423.8px;width:2.099999999999909px;height:1.0px;background:#555;'></div>
<div style='position:absolute;left:27.3px;top:466.9px;width:602.7px;height:1.5px;background:#4f5f80;'></div>
<div style='position:absolute;left:27.3px;top:468.4px;width:110.10000000000001px;height:17.900000000000034px;background:#c8d2e4;'></div>
<div style='position:absolute;left:137.4px;top:468.4px;width:492.6px;height:17.900000000000034px;background:#8093b5;'></div>
<div style='position:absolute;left:137.4px;top:485.5px;width:492.6px;height:0.8000000000000114px;background:#7487ab;'></div>
<div style='position:absolute;left:629.2px;top:468.4px;width:0.7999999999999545px;height:17.900000000000034px;background:#7487ab;'></div>
<div style='position:absolute;left:207.0px;top:468.4px;width:1.0px;height:17.900000000000034px;background:#6f82a6;'></div>
<div style='position:absolute;left:277.5px;top:468.4px;width:1.0px;height:17.900000000000034px;background:#6f82a6;'></div>
<div style='position:absolute;left:348.2px;top:468.4px;width:1.0px;height:17.900000000000034px;background:#6f82a6;'></div>
<div style='position:absolute;left:418.1px;top:468.4px;width:1.0px;height:17.900000000000034px;background:#6f82a6;'></div>
<div style='position:absolute;left:488.3px;top:468.4px;width:1.0px;height:17.900000000000034px;background:#6f82a6;'></div>
<div style='position:absolute;left:558.5px;top:468.4px;width:1.0px;height:17.900000000000034px;background:#6f82a6;'></div>
<div style='position:absolute;left:27.3px;top:486.3px;width:110.10000000000001px;height:113.49999999999994px;background:#f7f7f7;'></div>
<div style='position:absolute;left:27.3px;top:508.8px;width:110.10000000000001px;height:1.0px;background:#e3e3e3;'></div>
<div style='position:absolute;left:27.3px;top:531.0px;width:110.10000000000001px;height:1.0px;background:#e3e3e3;'></div>
<div style='position:absolute;left:27.3px;top:553.9px;width:110.10000000000001px;height:1.0px;background:#e3e3e3;'></div>
<div style='position:absolute;left:27.3px;top:576.9px;width:110.10000000000001px;height:1.0px;background:#e3e3e3;'></div>
<div style='position:absolute;left:27.3px;top:599.3px;width:602.7px;height:1.0px;background:#e3e3e3;'></div>
<div style='position:absolute;left:136.9px;top:486.3px;width:1.0px;height:113.49999999999994px;background:#ececec;'></div>
<div style='position:absolute;left:801px;top:145px;width:14px;height:488.5px;background:#e6e6e6;'></div>
<div style='position:absolute;left:803.5px;top:146.4px;width:9.799999999999955px;height:10.199999999999989px;background:#fff;border:1px solid #c6c6c6;box-sizing:border-box;'></div>
<svg style='position:absolute;left:805.9px;top:149.8px;overflow:visible' width='5' height='3' viewBox='0 0 5 3'><path d='M0 3h5l-2.5-3z' fill='#555'/></svg>
<div style='position:absolute;left:803.5px;top:156px;width:9.799999999999955px;height:445.4px;background:#fff;border:1px solid #c6c6c6;box-sizing:border-box;'></div>
<div style='position:absolute;left:803.5px;top:623.5px;width:9.799999999999955px;height:9.799999999999955px;background:#fff;border:1px solid #c6c6c6;box-sizing:border-box;'></div>
<svg style='position:absolute;left:805.9px;top:627.3px;overflow:visible' width='5' height='3' viewBox='0 0 5 3'><path d='M0 0h5l-2.5 3z' fill='#555'/></svg>
<div style='position:absolute;left:0px;top:634.0px;width:815px;height:19.0px;background:#e6e6e6;z-index:5;'></div>
<div style='position:absolute;left:0px;top:652.5px;width:815px;height:1.0px;background:#d4d4d4;'></div>
<svg style='position:absolute;left:16px;top:640px;overflow:visible;z-index:6' width='3' height='6' viewBox='0 0 3 6'><path d='M3 0v6l-3-3z' fill='#b9b9b9'/></svg>
<svg style='position:absolute;left:37px;top:640px;overflow:visible;z-index:6' width='3' height='6' viewBox='0 0 3 6'><path d='M0 0v6l3-3z' fill='#b9b9b9'/></svg>
<div style='position:absolute;left:68.5px;top:633.5px;width:64.6px;height:17.5px;background:#fff;z-index:5;'></div>
<div style='position:absolute;left:68.5px;top:633.5px;width:1.0px;height:17.5px;background:#c6c6c6;z-index:5;'></div>
<div style='position:absolute;left:132.6px;top:633.5px;width:1.0px;height:17.5px;background:#c6c6c6;z-index:5;'></div>
<div style='position:absolute;left:68.5px;top:649.2px;width:64.6px;height:2.0px;background:#217346;z-index:5;'></div>
<div style='position:absolute;left:162.1px;top:637px;width:1.0px;height:13px;background:#c6c6c6;z-index:5;'></div>
<div style='position:absolute;left:190px;top:637px;width:1px;height:13px;background:#c6c6c6;z-index:5;'></div>
<svg style='position:absolute;left:214.5px;top:637.7px;overflow:visible;z-index:6' width='11.2' height='11.2' viewBox='0 0 11.2 11.2'><circle cx='5.6' cy='5.6' r='5' fill='none' stroke='#666' stroke-width='1'/><path d='M5.6 2.8v5.6M2.8 5.6h5.6' stroke='#666' stroke-width='1.3'/></svg>
<svg style='position:absolute;left:488px;top:637px;overflow:visible;z-index:6' width='2' height='10' viewBox='0 0 2 10'><circle cx='1' cy='1' r='0.7' fill='#aaa'/><circle cx='1' cy='4.5' r='0.7' fill='#aaa'/><circle cx='1' cy='8' r='0.7' fill='#aaa'/></svg>
<div style='position:absolute;left:500.4px;top:638.7px;width:11.100000000000023px;height:10.099999999999909px;background:#fff;border:1px solid #c6c6c6;box-sizing:border-box;z-index:5;'></div>
<svg style='position:absolute;left:504.5px;top:641.5px;overflow:visible;z-index:6' width='3' height='5' viewBox='0 0 3 5'><path d='M3 0v5l-3-2.5z' fill='#555'/></svg>
<div style='position:absolute;left:511px;top:638.7px;width:224.39999999999998px;height:10.099999999999909px;background:#fff;border:1px solid #c6c6c6;box-sizing:border-box;z-index:5;'></div>
<div style='position:absolute;left:735.4px;top:638.7px;width:53.60000000000002px;height:10.099999999999909px;background:#dadada;z-index:5;'></div>
<div style='position:absolute;left:789px;top:638.7px;width:10.5px;height:10.099999999999909px;background:#fff;border:1px solid #c6c6c6;box-sizing:border-box;z-index:5;'></div>
<svg style='position:absolute;left:793px;top:641.5px;overflow:visible;z-index:6' width='3' height='5' viewBox='0 0 3 5'><path d='M0 0v5l3-2.5z' fill='#555'/></svg>
<div style='position:absolute;left:0px;top:653.5px;width:815px;height:13.5px;background:#f3f3f3;z-index:5;'></div>
<svg style='position:absolute;left:33.9px;top:656.5px;overflow:visible;z-index:6' width='9' height='9' viewBox='0 0 9 9'><rect x='0.5' y='2.5' width='8' height='6' fill='none' stroke='#666' stroke-width='0.9'/><path d='M2.5 4v4M4.5 5v3M6.5 3.5v4.5' stroke='#666' stroke-width='0.9'/><circle cx='1.8' cy='1.8' r='1.6' fill='#555'/></svg>
<div style='position:absolute;left:607.2px;top:653.7px;width:26.5px;height:13.299999999999955px;background:#c8c8c8;z-index:6;'></div>
<svg style='position:absolute;left:615.3px;top:656.1px;overflow:visible;z-index:6' width='9.5' height='9.5' viewBox='0 0 9.5 9.5'><rect x='0' y='0' width='9.5' height='9.5' rx='0.8' fill='#7a7a7a'/><g fill='#c8c8c8'><rect x='1.2' y='1.2' width='1.8' height='1.8'/><rect x='3.85' y='1.2' width='1.8' height='1.8'/><rect x='6.5' y='1.2' width='1.8' height='1.8'/><rect x='1.2' y='3.85' width='1.8' height='1.8'/><rect x='3.85' y='3.85' width='1.8' height='1.8'/><rect x='6.5' y='3.85' width='1.8' height='1.8'/><rect x='1.2' y='6.5' width='1.8' height='1.8'/><rect x='3.85' y='6.5' width='1.8' height='1.8'/><rect x='6.5' y='6.5' width='1.8' height='1.8'/></g></svg>
<svg style='position:absolute;left:642.3px;top:656.1px;overflow:visible;z-index:6' width='10.5' height='9.6' viewBox='0 0 10.5 9.6'><rect x='0.5' y='0.5' width='9.5' height='8.6' rx='1.2' fill='#e4e4e4' stroke='#8a8a8a' stroke-width='0.9'/><path d='M3.5 2.2h-1v5.2h1M7 2.2h1v5.2h-1' fill='none' stroke='#8a8a8a' stroke-width='0.8'/></svg>
<svg style='position:absolute;left:669.3px;top:656.1px;overflow:visible;z-index:6' width='10.2' height='9.6' viewBox='0 0 10.2 9.6'><rect x='0.5' y='0.5' width='9.2' height='8.6' rx='1' fill='none' stroke='#8a8a8a' stroke-width='0.9'/><path d='M0.5 5h5v-4.5M3 0.5v4.5' fill='none' stroke='#8a8a8a' stroke-width='0.9'/></svg>
<div style='position:absolute;left:691.3px;top:660.2px;width:4.400000000000091px;height:1.099999999999909px;background:#444;z-index:6;'></div>
<div style='position:absolute;left:699px;top:660.5px;width:70.70000000000005px;height:0.7999999999999545px;background:#a6a6a6;z-index:6;'></div>
<div style='position:absolute;left:727.3px;top:656.3px;width:3.1000000000000227px;height:8.700000000000045px;background:#5f5f5f;z-index:6;'></div>
<div style='position:absolute;left:734px;top:658.5px;width:0.7999999999999545px;height:4.5px;background:#a6a6a6;z-index:6;'></div>
<div style='position:absolute;left:771.9px;top:660.2px;width:5.5px;height:1.099999999999909px;background:#444;z-index:6;'></div>
<div style='position:absolute;left:774.1px;top:658px;width:1.1000000000000227px;height:5.5px;background:#444;z-index:6;'></div>
<div style='position:absolute;left:337.00px;top:3.90px;font-size:11px;font-weight:normal;color:#d9e8dd;white-space:pre;line-height:1;transform:scale(0.7761,1.0000);transform-origin:0 0;'>재구매 고객 현황_Template  -  Excel</div>
<div style='position:absolute;left:644.11px;top:4.00px;font-size:10px;font-weight:normal;color:#1a4d2b;white-space:pre;line-height:1;-webkit-text-stroke:0.2px #1a4d2b;transform:scale(0.8857,1.0000);transform-origin:0 0;'>로그인</div>
<div style='position:absolute;left:8.13px;top:27.00px;font-size:11px;font-weight:normal;color:#fff;white-space:pre;line-height:1;transform:scale(0.8650,1.0000);transform-origin:0 0;'>파일</div>
<div style='position:absolute;left:76.60px;top:27.00px;font-size:11px;font-weight:normal;color:#fff;white-space:pre;line-height:1;transform:scale(0.8143,1.0000);transform-origin:0 0;'>삽입</div>
<div style='position:absolute;left:112.90px;top:27.00px;font-size:11px;font-weight:normal;color:#fff;white-space:pre;line-height:1;transform:scale(0.7861,1.0000);transform-origin:0 0;'>페이지 레이아웃</div>
<div style='position:absolute;left:193.58px;top:27.00px;font-size:11px;font-weight:normal;color:#fff;white-space:pre;line-height:1;transform:scale(0.8250,1.0000);transform-origin:0 0;'>수식</div>
<div style='position:absolute;left:230.50px;top:27.50px;font-size:11px;font-weight:normal;color:#fff;white-space:pre;line-height:1;transform:scale(0.7906,1.0000);transform-origin:0 0;'>데이터</div>
<div style='position:absolute;left:274.58px;top:27.00px;font-size:11px;font-weight:normal;color:#fff;white-space:pre;line-height:1;transform:scale(0.8200,1.0000);transform-origin:0 0;'>검토</div>
<div style='position:absolute;left:311.17px;top:27.50px;font-size:11px;font-weight:normal;color:#fff;white-space:pre;line-height:1;transform:scale(0.8300,1.0000);transform-origin:0 0;'>보기</div>
<div style='position:absolute;left:347.49px;top:27.00px;font-size:11px;font-weight:normal;color:#fff;white-space:pre;line-height:1;transform:scale(0.8067,1.0000);transform-origin:0 0;'>개발 도구</div>
<div style='position:absolute;left:458.43px;top:27.00px;font-size:11px;font-weight:normal;color:#fff;white-space:pre;line-height:1;transform:scale(0.7750,1.0000);transform-origin:0 0;'>도움말</div>
<div style='position:absolute;left:515.52px;top:27.00px;font-size:11px;font-weight:normal;color:#fff;white-space:pre;line-height:1;transform:scale(0.7843,1.0000);transform-origin:0 0;'>어떤 작업을 원하시나요?</div>
<div style='position:absolute;left:780.97px;top:27.00px;font-size:11px;font-weight:normal;color:#fff;white-space:pre;line-height:1;transform:scale(0.8300,1.0000);transform-origin:0 0;'>공유</div>
<div style='position:absolute;left:47.20px;top:26.90px;font-size:11px;font-weight:normal;color:#217346;white-space:pre;line-height:1;-webkit-text-stroke:0.1px #217346;transform:scale(1.1000,1.0000);transform-origin:0 0;'>홈</div>
<div style='position:absolute;left:404.00px;top:29.00px;font-size:10px;font-weight:normal;color:#fff;white-space:pre;line-height:1;transform:scale(0.8233,1.0000);transform-origin:0 0;'>i-MATRIX</div>
<div style='position:absolute;left:8.13px;top:98.75px;font-size:10px;font-weight:normal;color:#444;white-space:pre;line-height:1;-webkit-text-stroke:0.08px #444;transform:scale(0.8684,1.0000);transform-origin:0 0;'>클립보드</div>
<div style='position:absolute;left:139.63px;top:98.75px;font-size:10px;font-weight:normal;color:#444;white-space:pre;line-height:1;-webkit-text-stroke:0.08px #444;transform:scale(0.8684,1.0000);transform-origin:0 0;'>글꼴</div>
<div style='position:absolute;left:286.96px;top:98.75px;font-size:10px;font-weight:normal;color:#444;white-space:pre;line-height:1;-webkit-text-stroke:0.08px #444;transform:scale(0.9389,1.0000);transform-origin:0 0;'>맞춤</div>
<div style='position:absolute;left:385.82px;top:98.75px;font-size:10px;font-weight:normal;color:#444;white-space:pre;line-height:1;-webkit-text-stroke:0.08px #444;transform:scale(0.8780,1.0000);transform-origin:0 0;'>표시 형식</div>
<div style='position:absolute;left:497.61px;top:98.75px;font-size:10px;font-weight:normal;color:#444;white-space:pre;line-height:1;-webkit-text-stroke:0.08px #444;transform:scale(0.8929,1.0000);transform-origin:0 0;'>스타일</div>
<div style='position:absolute;left:585.70px;top:98.75px;font-size:10px;font-weight:normal;color:#444;white-space:pre;line-height:1;-webkit-text-stroke:0.08px #444;transform:scale(0.7444,1.0000);transform-origin:0 0;'>셀</div>
<div style='position:absolute;left:653.11px;top:98.75px;font-size:10px;font-weight:normal;color:#444;white-space:pre;line-height:1;-webkit-text-stroke:0.08px #444;transform:scale(0.8889,1.0000);transform-origin:0 0;'>편집</div>
<div style='position:absolute;left:0.82px;top:73.50px;font-size:10px;font-weight:normal;color:#262626;white-space:pre;line-height:1;-webkit-text-stroke:0.08px #262626;transform:scale(0.8763,1.0000);transform-origin:0 0;'>붙여넣기</div>
<div style='position:absolute;left:70.42px;top:54.65px;font-size:10px;font-weight:normal;color:#262626;white-space:pre;line-height:1;-webkit-text-stroke:0.08px #262626;transform:scale(0.8756,1.0000);transform-origin:0 0;'>맑은 고딕</div>
<div style='position:absolute;left:211.94px;top:55.20px;font-size:10px;font-weight:normal;color:#262626;white-space:pre;line-height:1;-webkit-text-stroke:0.08px #262626;transform:scale(0.8556,1.0000);transform-origin:0 0;'>가</div>
<div style='position:absolute;left:227.67px;top:55.95px;font-size:10px;font-weight:normal;color:#262626;white-space:pre;line-height:1;-webkit-text-stroke:0.08px #262626;transform:scale(0.8333,1.0000);transform-origin:0 0;'>가</div>
<div style='position:absolute;left:73.20px;top:77.85px;font-size:7px;font-weight:bold;color:#1a1a1a;white-space:pre;line-height:1;-webkit-text-stroke:0.2px #1a1a1a;transform:scale(0.8857,1.0000);transform-origin:0 0;'>가</div>
<div style='position:absolute;left:87.76px;top:77.35px;font-size:7px;font-weight:normal;color:#262626;white-space:pre;line-height:1;-webkit-text-stroke:0.25px #262626;transform:scale(0.9429,1.0000);transform-origin:0 0;'><i>가</i></div>
<div style='position:absolute;left:103.03px;top:77.35px;font-size:7px;font-weight:normal;color:#262626;white-space:pre;line-height:1;-webkit-text-stroke:0.25px #262626;transform:scale(1.1667,1.0000);transform-origin:0 0;'>가</div>
<div style='position:absolute;left:187.76px;top:75.05px;font-size:10px;font-weight:normal;color:#262626;white-space:pre;line-height:1;-webkit-text-stroke:0.08px #262626;transform:scale(0.9444,1.0000);transform-origin:0 0;'>가</div>
<div style='position:absolute;left:217.90px;top:75.30px;font-size:6px;font-weight:normal;color:#262626;white-space:pre;line-height:1;-webkit-text-stroke:0.25px #262626;transform:scale(1.0455,1.0000);transform-origin:0 0;'>내천</div>
<div style='position:absolute;left:335.90px;top:53.10px;font-size:6px;font-weight:normal;color:#444;white-space:pre;line-height:1;-webkit-text-stroke:0.2px #444;transform:scale(0.8333,1.0000);transform-origin:0 0;'>가나</div>
<div style='position:absolute;left:335.90px;top:58.95px;font-size:6px;font-weight:normal;color:#444;white-space:pre;line-height:1;-webkit-text-stroke:0.2px #444;transform:scale(0.7667,1.0000);transform-origin:0 0;'>다</div>
<div style='position:absolute;left:365.95px;top:54.65px;font-size:10px;font-weight:normal;color:#262626;white-space:pre;line-height:1;-webkit-text-stroke:0.08px #262626;transform:scale(0.8526,1.0000);transform-origin:0 0;'>일반</div>
<div style='position:absolute;left:391.80px;top:77.35px;font-size:10px;font-weight:normal;color:#333;white-space:pre;line-height:1;transform:scale(1.0667,1.0000);transform-origin:0 0;'>%</div>
<div style='position:absolute;left:409.50px;top:74.75px;font-size:10px;font-weight:bold;color:#333;white-space:pre;line-height:1;transform:scale(1.2333,1.0000);transform-origin:0 0;'>,</div>
<div style='position:absolute;left:465.21px;top:73.10px;font-size:10px;font-weight:normal;color:#262626;white-space:pre;line-height:1;-webkit-text-stroke:0.08px #262626;transform:scale(0.8893,1.0000);transform-origin:0 0;'>조건부</div>
<div style='position:absolute;left:465.96px;top:84.40px;font-size:10px;font-weight:normal;color:#262626;white-space:pre;line-height:1;-webkit-text-stroke:0.08px #262626;transform:scale(0.8444,1.0000);transform-origin:0 0;'>서식</div>
<div style='position:absolute;left:503.68px;top:73.10px;font-size:10px;font-weight:normal;color:#262626;white-space:pre;line-height:1;-webkit-text-stroke:0.08px #262626;transform:scale(0.9250,1.0000);transform-origin:0 0;'>표</div>
<div style='position:absolute;left:495.67px;top:84.40px;font-size:10px;font-weight:normal;color:#262626;white-space:pre;line-height:1;-webkit-text-stroke:0.08px #262626;transform:scale(0.8333,1.0000);transform-origin:0 0;'>서식</div>
<div style='position:absolute;left:537.00px;top:73.10px;font-size:10px;font-weight:normal;color:#262626;white-space:pre;line-height:1;-webkit-text-stroke:0.08px #262626;transform:scale(0.8889,1.0000);transform-origin:0 0;'>셀</div>
<div style='position:absolute;left:523.95px;top:83.90px;font-size:10px;font-weight:normal;color:#262626;white-space:pre;line-height:1;-webkit-text-stroke:0.08px #262626;transform:scale(0.8464,1.0000);transform-origin:0 0;'>스타일</div>
<div style='position:absolute;left:580.00px;top:49.35px;font-size:10px;font-weight:normal;color:#262626;white-space:pre;line-height:1;-webkit-text-stroke:0.08px #262626;transform:scale(0.9000,1.0000);transform-origin:0 0;'>삽입</div>
<div style='position:absolute;left:580.11px;top:65.35px;font-size:10px;font-weight:normal;color:#262626;white-space:pre;line-height:1;-webkit-text-stroke:0.08px #262626;transform:scale(0.8889,1.0000);transform-origin:0 0;'>삭제</div>
<div style='position:absolute;left:580.11px;top:82.10px;font-size:10px;font-weight:normal;color:#262626;white-space:pre;line-height:1;-webkit-text-stroke:0.08px #262626;transform:scale(0.8889,1.0000);transform-origin:0 0;'>서식</div>
<div style='position:absolute;left:643.80px;top:73.30px;font-size:10px;font-weight:normal;color:#262626;white-space:pre;line-height:1;-webkit-text-stroke:0.08px #262626;transform:scale(0.9000,1.0000);transform-origin:0 0;'>정렬 및</div>
<div style='position:absolute;left:647.38px;top:84.30px;font-size:10px;font-weight:normal;color:#262626;white-space:pre;line-height:1;-webkit-text-stroke:0.08px #262626;transform:scale(0.8222,1.0000);transform-origin:0 0;'>필터</div>
<div style='position:absolute;left:675.59px;top:73.30px;font-size:10px;font-weight:normal;color:#262626;white-space:pre;line-height:1;-webkit-text-stroke:0.08px #262626;transform:scale(0.9129,1.0000);transform-origin:0 0;'>찾기 및</div>
<div style='position:absolute;left:679.70px;top:84.30px;font-size:10px;font-weight:normal;color:#262626;white-space:pre;line-height:1;-webkit-text-stroke:0.08px #262626;transform:scale(0.8053,1.0000);transform-origin:0 0;'>선택</div>
<div style='position:absolute;left:5.40px;top:123.10px;font-size:11px;font-weight:normal;color:#4a4a4a;white-space:pre;line-height:1;transform:scale(0.9462,1.0000);transform-origin:0 0;'>A1</div>
<div style='position:absolute;left:18.15px;top:146.10px;font-size:8.5px;font-weight:normal;color:#222;white-space:pre;line-height:1;'>A</div>
<div style='position:absolute;left:50.40px;top:146.10px;font-size:8.5px;font-weight:normal;color:#222;white-space:pre;line-height:1;'>B</div>
<div style='position:absolute;left:105.45px;top:146.10px;font-size:8.5px;font-weight:normal;color:#222;white-space:pre;line-height:1;'>C</div>
<div style='position:absolute;left:169.45px;top:146.10px;font-size:8.5px;font-weight:normal;color:#222;white-space:pre;line-height:1;'>D</div>
<div style='position:absolute;left:239.75px;top:146.10px;font-size:8.5px;font-weight:normal;color:#222;white-space:pre;line-height:1;'>E</div>
<div style='position:absolute;left:310.85px;top:146.10px;font-size:8.5px;font-weight:normal;color:#222;white-space:pre;line-height:1;'>F</div>
<div style='position:absolute;left:380.65px;top:146.10px;font-size:8.5px;font-weight:normal;color:#222;white-space:pre;line-height:1;'>G</div>
<div style='position:absolute;left:450.70px;top:146.10px;font-size:8.5px;font-weight:normal;color:#222;white-space:pre;line-height:1;'>H</div>
<div style='position:absolute;left:522.90px;top:146.10px;font-size:8.5px;font-weight:normal;color:#222;white-space:pre;line-height:1;'>I</div>
<div style='position:absolute;left:592.25px;top:146.10px;font-size:8.5px;font-weight:normal;color:#222;white-space:pre;line-height:1;'>J</div>
<div style='position:absolute;left:632.65px;top:146.10px;font-size:8.5px;font-weight:normal;color:#222;white-space:pre;line-height:1;'>K</div>
<div style='position:absolute;left:664.75px;top:146.10px;font-size:8.5px;font-weight:normal;color:#222;white-space:pre;line-height:1;'>L</div>
<div style='position:absolute;left:710.60px;top:146.10px;font-size:8.5px;font-weight:normal;color:#222;white-space:pre;line-height:1;'>M</div>
<div style='position:absolute;left:755.75px;top:146.10px;font-size:8.5px;font-weight:normal;color:#222;white-space:pre;line-height:1;'>N</div>
<div style='position:absolute;left:4.20px;top:155.55px;font-size:8.5px;font-weight:normal;color:#333;white-space:pre;line-height:1;'>1</div>
<div style='position:absolute;left:4.20px;top:177.15px;font-size:8.5px;font-weight:normal;color:#333;white-space:pre;line-height:1;'>2</div>
<div style='position:absolute;left:4.20px;top:186.95px;font-size:8.5px;font-weight:normal;color:#333;white-space:pre;line-height:1;'>3</div>
<div style='position:absolute;left:4.20px;top:197.65px;font-size:8.5px;font-weight:normal;color:#333;white-space:pre;line-height:1;'>4</div>
<div style='position:absolute;left:4.20px;top:219.45px;font-size:8.5px;font-weight:normal;color:#333;white-space:pre;line-height:1;'>5</div>
<div style='position:absolute;left:4.20px;top:238.15px;font-size:8.5px;font-weight:normal;color:#333;white-space:pre;line-height:1;'>6</div>
<div style='position:absolute;left:4.20px;top:260.15px;font-size:8.5px;font-weight:normal;color:#333;white-space:pre;line-height:1;'>7</div>
<div style='position:absolute;left:4.20px;top:283.35px;font-size:8.5px;font-weight:normal;color:#333;white-space:pre;line-height:1;'>8</div>
<div style='position:absolute;left:4.20px;top:294.35px;font-size:8.5px;font-weight:normal;color:#333;white-space:pre;line-height:1;'>9</div>
<div style='position:absolute;left:2.20px;top:316.15px;font-size:8.5px;font-weight:normal;color:#333;white-space:pre;line-height:1;'>10</div>
<div style='position:absolute;left:2.20px;top:334.55px;font-size:8.5px;font-weight:normal;color:#333;white-space:pre;line-height:1;'>11</div>
<div style='position:absolute;left:2.20px;top:357.55px;font-size:8.5px;font-weight:normal;color:#333;white-space:pre;line-height:1;'>12</div>
<div style='position:absolute;left:2.20px;top:379.85px;font-size:8.5px;font-weight:normal;color:#333;white-space:pre;line-height:1;'>13</div>
<div style='position:absolute;left:2.20px;top:402.65px;font-size:8.5px;font-weight:normal;color:#333;white-space:pre;line-height:1;'>14</div>
<div style='position:absolute;left:2.20px;top:425.35px;font-size:8.5px;font-weight:normal;color:#333;white-space:pre;line-height:1;'>15</div>
<div style='position:absolute;left:2.20px;top:435.45px;font-size:8.5px;font-weight:normal;color:#333;white-space:pre;line-height:1;'>16</div>
<div style='position:absolute;left:2.20px;top:457.15px;font-size:8.5px;font-weight:normal;color:#333;white-space:pre;line-height:1;'>17</div>
<div style='position:absolute;left:2.20px;top:476.45px;font-size:8.5px;font-weight:normal;color:#333;white-space:pre;line-height:1;'>18</div>
<div style='position:absolute;left:2.20px;top:499.45px;font-size:8.5px;font-weight:normal;color:#333;white-space:pre;line-height:1;'>19</div>
<div style='position:absolute;left:2.20px;top:521.65px;font-size:8.5px;font-weight:normal;color:#333;white-space:pre;line-height:1;'>20</div>
<div style='position:absolute;left:2.20px;top:544.55px;font-size:8.5px;font-weight:normal;color:#333;white-space:pre;line-height:1;'>21</div>
<div style='position:absolute;left:2.20px;top:567.55px;font-size:8.5px;font-weight:normal;color:#333;white-space:pre;line-height:1;'>22</div>
<div style='position:absolute;left:2.20px;top:589.95px;font-size:8.5px;font-weight:normal;color:#333;white-space:pre;line-height:1;'>23</div>
<div style='position:absolute;left:2.20px;top:603.35px;font-size:8.5px;font-weight:normal;color:#333;white-space:pre;line-height:1;'>24</div>
<div style='position:absolute;left:2.20px;top:616.35px;font-size:8.5px;font-weight:normal;color:#333;white-space:pre;line-height:1;'>25</div>
<div style='position:absolute;left:2.20px;top:630.15px;font-size:8.5px;font-weight:normal;color:#333;white-space:pre;line-height:1;'>26</div>
<div style='position:absolute;left:29.50px;top:213.85px;font-size:9px;font-weight:bold;color:#222;white-space:pre;line-height:1;transform:scale(0.9471,1.0000);transform-origin:0 0;'>구매 유형별 현황</div>
<div style='position:absolute;left:74.01px;top:235.35px;font-size:8px;font-weight:normal;color:#333;white-space:pre;line-height:1;-webkit-text-stroke:0.12px #333;transform:scale(1.0429,1.0000);transform-origin:0 0;'>구분</div>
<div style='position:absolute;left:155.92px;top:235.35px;font-size:8px;font-weight:normal;color:#ffffff;white-space:pre;line-height:1;-webkit-text-stroke:0.05px #ffffff;transform:scale(1.0333,1.0000);transform-origin:0 0;'>구매건수</div>
<div style='position:absolute;left:224.75px;top:235.35px;font-size:8px;font-weight:normal;color:#ffffff;white-space:pre;line-height:1;-webkit-text-stroke:0.05px #ffffff;transform:scale(0.9730,1.0000);transform-origin:0 0;'>매출액(원)</div>
<div style='position:absolute;left:292.60px;top:235.35px;font-size:8px;font-weight:normal;color:#ffffff;white-space:pre;line-height:1;-webkit-text-stroke:0.05px #ffffff;transform:scale(0.9881,1.0000);transform-origin:0 0;'>매출액 비중</div>
<div style='position:absolute;left:67.07px;top:255.60px;font-size:8px;font-weight:normal;color:#333;white-space:pre;line-height:1;-webkit-text-stroke:0.12px #333;transform:scale(1.0318,1.0000);transform-origin:0 0;'>첫구매</div>
<div style='position:absolute;left:68.10px;top:278.10px;font-size:8px;font-weight:normal;color:#333;white-space:pre;line-height:1;-webkit-text-stroke:0.12px #333;transform:scale(0.9870,1.0000);transform-origin:0 0;'>재구매</div>
<div style='position:absolute;left:29.30px;top:310.40px;font-size:9px;font-weight:bold;color:#222;white-space:pre;line-height:1;transform:scale(0.9500,1.0000);transform-origin:0 0;'>카테고리별 구매 현황</div>
<div style='position:absolute;left:73.64px;top:331.25px;font-size:8px;font-weight:normal;color:#333;white-space:pre;line-height:1;-webkit-text-stroke:0.12px #333;transform:scale(1.0571,1.0000);transform-origin:0 0;'>구분</div>
<div style='position:absolute;left:163.99px;top:331.25px;font-size:8px;font-weight:normal;color:#ffffff;white-space:pre;line-height:1;-webkit-text-stroke:0.05px #ffffff;transform:scale(1.0571,1.0000);transform-origin:0 0;'>뷰티</div>
<div style='position:absolute;left:226.25px;top:330.75px;font-size:8px;font-weight:normal;color:#ffffff;white-space:pre;line-height:1;-webkit-text-stroke:0.05px #ffffff;'>남성의류</div>
<div style='position:absolute;left:296.91px;top:331.25px;font-size:8px;font-weight:normal;color:#ffffff;white-space:pre;line-height:1;-webkit-text-stroke:0.05px #ffffff;transform:scale(0.9394,1.0000);transform-origin:0 0;'>식품/음료</div>
<div style='position:absolute;left:368.15px;top:330.75px;font-size:8px;font-weight:normal;color:#ffffff;white-space:pre;line-height:1;-webkit-text-stroke:0.05px #ffffff;transform:scale(0.9688,1.0000);transform-origin:0 0;'>생활용품</div>
<div style='position:absolute;left:429.20px;top:330.75px;font-size:8px;font-weight:normal;color:#ffffff;white-space:pre;line-height:1;-webkit-text-stroke:0.05px #ffffff;'>건강보조식품</div>
<div style='position:absolute;left:507.40px;top:330.75px;font-size:8px;font-weight:normal;color:#ffffff;white-space:pre;line-height:1;-webkit-text-stroke:0.05px #ffffff;'>여성의류</div>
<div style='position:absolute;left:578.75px;top:331.25px;font-size:8px;font-weight:normal;color:#ffffff;white-space:pre;line-height:1;-webkit-text-stroke:0.05px #ffffff;transform:scale(0.9688,1.0000);transform-origin:0 0;'>패션잡화</div>
<div style='position:absolute;left:40.14px;top:363.05px;font-size:8px;font-weight:normal;color:#333;white-space:pre;line-height:1;-webkit-text-stroke:0.12px #333;transform:scale(1.0636,1.0000);transform-origin:0 0;'>첫구매</div>
<div style='position:absolute;left:41.20px;top:408.45px;font-size:8px;font-weight:normal;color:#333;white-space:pre;line-height:1;-webkit-text-stroke:0.12px #333;transform:scale(1.0174,1.0000);transform-origin:0 0;'>재구매</div>
<div style='position:absolute;left:92.47px;top:352.40px;font-size:8px;font-weight:normal;color:#333;white-space:pre;line-height:1;-webkit-text-stroke:0.12px #333;transform:scale(1.0300,1.0000);transform-origin:0 0;'>구매건수</div>
<div style='position:absolute;left:92.47px;top:397.60px;font-size:8px;font-weight:normal;color:#333;white-space:pre;line-height:1;-webkit-text-stroke:0.12px #333;transform:scale(1.0300,1.0000);transform-origin:0 0;'>구매건수</div>
<div style='position:absolute;left:90.80px;top:374.20px;font-size:8px;font-weight:normal;color:#333;white-space:pre;line-height:1;-webkit-text-stroke:0.12px #333;transform:scale(0.9459,1.0000);transform-origin:0 0;'>매출액(원)</div>
<div style='position:absolute;left:90.80px;top:419.50px;font-size:8px;font-weight:normal;color:#333;white-space:pre;line-height:1;-webkit-text-stroke:0.12px #333;transform:scale(0.9459,1.0000);transform-origin:0 0;'>매출액(원)</div>
<div style='position:absolute;left:268.80px;top:351.50px;font-size:8.5px;font-weight:normal;color:#333;white-space:pre;line-height:1;transform:scale(0.8400,1.0000);transform-origin:0 0;'>0</div>
<div style='position:absolute;left:268.80px;top:396.80px;font-size:8.5px;font-weight:normal;color:#333;white-space:pre;line-height:1;transform:scale(0.8400,1.0000);transform-origin:0 0;'>0</div>
<div style='position:absolute;left:339.50px;top:351.50px;font-size:8.5px;font-weight:normal;color:#333;white-space:pre;line-height:1;transform:scale(0.8400,1.0000);transform-origin:0 0;'>0</div>
<div style='position:absolute;left:339.50px;top:396.80px;font-size:8.5px;font-weight:normal;color:#333;white-space:pre;line-height:1;transform:scale(0.8400,1.0000);transform-origin:0 0;'>0</div>
<div style='position:absolute;left:409.40px;top:351.50px;font-size:8.5px;font-weight:normal;color:#333;white-space:pre;line-height:1;transform:scale(0.8400,1.0000);transform-origin:0 0;'>0</div>
<div style='position:absolute;left:409.40px;top:396.80px;font-size:8.5px;font-weight:normal;color:#333;white-space:pre;line-height:1;transform:scale(0.8400,1.0000);transform-origin:0 0;'>0</div>
<div style='position:absolute;left:479.60px;top:351.50px;font-size:8.5px;font-weight:normal;color:#333;white-space:pre;line-height:1;transform:scale(0.8400,1.0000);transform-origin:0 0;'>0</div>
<div style='position:absolute;left:479.60px;top:396.80px;font-size:8.5px;font-weight:normal;color:#333;white-space:pre;line-height:1;transform:scale(0.8400,1.0000);transform-origin:0 0;'>0</div>
<div style='position:absolute;left:549.80px;top:351.50px;font-size:8.5px;font-weight:normal;color:#333;white-space:pre;line-height:1;transform:scale(0.8400,1.0000);transform-origin:0 0;'>0</div>
<div style='position:absolute;left:549.80px;top:396.80px;font-size:8.5px;font-weight:normal;color:#333;white-space:pre;line-height:1;transform:scale(0.8400,1.0000);transform-origin:0 0;'>0</div>
<div style='position:absolute;left:620.30px;top:351.50px;font-size:8.5px;font-weight:normal;color:#333;white-space:pre;line-height:1;transform:scale(0.8400,1.0000);transform-origin:0 0;'>0</div>
<div style='position:absolute;left:620.30px;top:396.80px;font-size:8.5px;font-weight:normal;color:#333;white-space:pre;line-height:1;transform:scale(0.8400,1.0000);transform-origin:0 0;'>0</div>
<div style='position:absolute;left:29.20px;top:452.30px;font-size:9px;font-weight:bold;color:#222;white-space:pre;line-height:1;transform:scale(0.9559,1.0000);transform-origin:0 0;'>재구매 주기별 구매 건수 비중</div>
<div style='position:absolute;left:63.00px;top:473.25px;font-size:8px;font-weight:normal;color:#333;white-space:pre;line-height:1;-webkit-text-stroke:0.12px #333;transform:scale(0.9512,1.0000);transform-origin:0 0;'>재구매 주기</div>
<div style='position:absolute;left:163.99px;top:473.25px;font-size:8px;font-weight:normal;color:#ffffff;white-space:pre;line-height:1;-webkit-text-stroke:0.05px #ffffff;transform:scale(1.0571,1.0000);transform-origin:0 0;'>뷰티</div>
<div style='position:absolute;left:226.25px;top:472.75px;font-size:8px;font-weight:normal;color:#ffffff;white-space:pre;line-height:1;-webkit-text-stroke:0.05px #ffffff;'>남성의류</div>
<div style='position:absolute;left:296.91px;top:473.25px;font-size:8px;font-weight:normal;color:#ffffff;white-space:pre;line-height:1;-webkit-text-stroke:0.05px #ffffff;transform:scale(0.9394,1.0000);transform-origin:0 0;'>식품/음료</div>
<div style='position:absolute;left:368.15px;top:472.75px;font-size:8px;font-weight:normal;color:#ffffff;white-space:pre;line-height:1;-webkit-text-stroke:0.05px #ffffff;transform:scale(0.9688,1.0000);transform-origin:0 0;'>생활용품</div>
<div style='position:absolute;left:429.20px;top:472.75px;font-size:8px;font-weight:normal;color:#ffffff;white-space:pre;line-height:1;-webkit-text-stroke:0.05px #ffffff;'>건강보조식품</div>
<div style='position:absolute;left:507.40px;top:472.75px;font-size:8px;font-weight:normal;color:#ffffff;white-space:pre;line-height:1;-webkit-text-stroke:0.05px #ffffff;'>여성의류</div>
<div style='position:absolute;left:578.75px;top:473.25px;font-size:8px;font-weight:normal;color:#ffffff;white-space:pre;line-height:1;-webkit-text-stroke:0.05px #ffffff;transform:scale(0.9688,1.0000);transform-origin:0 0;'>패션잡화</div>
<div style='position:absolute;left:66.96px;top:493.80px;font-size:8px;font-weight:normal;color:#333;white-space:pre;line-height:1;-webkit-text-stroke:0.12px #333;transform:scale(0.9355,1.0000);transform-origin:0 0;'>당일~1일</div>
<div style='position:absolute;left:63.43px;top:516.90px;font-size:8px;font-weight:normal;color:#333;white-space:pre;line-height:1;-webkit-text-stroke:0.12px #333;transform:scale(0.9730,1.0000);transform-origin:0 0;'>1주일 이내</div>
<div style='position:absolute;left:63.45px;top:539.50px;font-size:8px;font-weight:normal;color:#333;white-space:pre;line-height:1;-webkit-text-stroke:0.12px #333;transform:scale(0.9474,1.0000);transform-origin:0 0;'>1주일 이후</div>
<div style='position:absolute;left:65.43px;top:562.50px;font-size:8px;font-weight:normal;color:#333;white-space:pre;line-height:1;-webkit-text-stroke:0.12px #333;transform:scale(0.9697,1.0000);transform-origin:0 0;'>15일 이내</div>
<div style='position:absolute;left:63.43px;top:585.10px;font-size:8px;font-weight:normal;color:#333;white-space:pre;line-height:1;-webkit-text-stroke:0.12px #333;transform:scale(0.9730,1.0000);transform-origin:0 0;'>1개월 이내</div>
<div style='position:absolute;left:55.40px;top:601.75px;font-size:9px;font-weight:bold;color:#222;white-space:pre;line-height:1;transform:scale(0.9518,1.0000);transform-origin:0 0;'>카테고리 합계</div>
<div style='position:absolute;left:200.90px;top:602.55px;font-size:8.5px;font-weight:normal;color:#333;white-space:pre;line-height:1;transform:scale(0.9400,1.0000);transform-origin:0 0;'>0</div>
<div style='position:absolute;left:271.40px;top:602.55px;font-size:8.5px;font-weight:normal;color:#333;white-space:pre;line-height:1;transform:scale(0.9400,1.0000);transform-origin:0 0;'>0</div>
<div style='position:absolute;left:342.10px;top:602.55px;font-size:8.5px;font-weight:normal;color:#333;white-space:pre;line-height:1;transform:scale(0.9400,1.0000);transform-origin:0 0;'>0</div>
<div style='position:absolute;left:412.00px;top:602.55px;font-size:8.5px;font-weight:normal;color:#333;white-space:pre;line-height:1;transform:scale(0.9400,1.0000);transform-origin:0 0;'>0</div>
<div style='position:absolute;left:482.20px;top:602.55px;font-size:8.5px;font-weight:normal;color:#333;white-space:pre;line-height:1;transform:scale(0.9400,1.0000);transform-origin:0 0;'>0</div>
<div style='position:absolute;left:552.40px;top:602.55px;font-size:8.5px;font-weight:normal;color:#333;white-space:pre;line-height:1;transform:scale(0.9400,1.0000);transform-origin:0 0;'>0</div>
<div style='position:absolute;left:622.90px;top:602.55px;font-size:8.5px;font-weight:normal;color:#333;white-space:pre;line-height:1;transform:scale(0.9400,1.0000);transform-origin:0 0;'>0</div>
<div style='position:absolute;left:76.60px;top:638.00px;font-size:10px;font-weight:normal;color:#217346;white-space:pre;line-height:1;z-index:6;-webkit-text-stroke:0.08px #217346;transform:scale(0.9196,1.0000);transform-origin:0 0;'>V_재구매율</div>
<div style='position:absolute;left:141.00px;top:638.80px;font-size:10px;font-weight:normal;color:#444;white-space:pre;line-height:1;z-index:6;transform:scale(0.9000,1.0000);transform-origin:0 0;'>D1</div>
<div style='position:absolute;left:171.07px;top:638.80px;font-size:10px;font-weight:normal;color:#444;white-space:pre;line-height:1;z-index:6;transform:scale(0.8273,1.0000);transform-origin:0 0;'>P1</div>
<div style='position:absolute;left:1.83px;top:655.85px;font-size:10px;font-weight:normal;color:#444;white-space:pre;line-height:1;z-index:6;-webkit-text-stroke:0.08px #444;transform:scale(0.8722,1.0000);transform-origin:0 0;'>준비</div>
<div style='position:absolute;left:785.10px;top:656.75px;font-size:10px;font-weight:normal;color:#444;white-space:pre;line-height:1;z-index:6;transform:scale(0.8300,1.0000);transform-origin:0 0;'>85%</div>
</body></html>
